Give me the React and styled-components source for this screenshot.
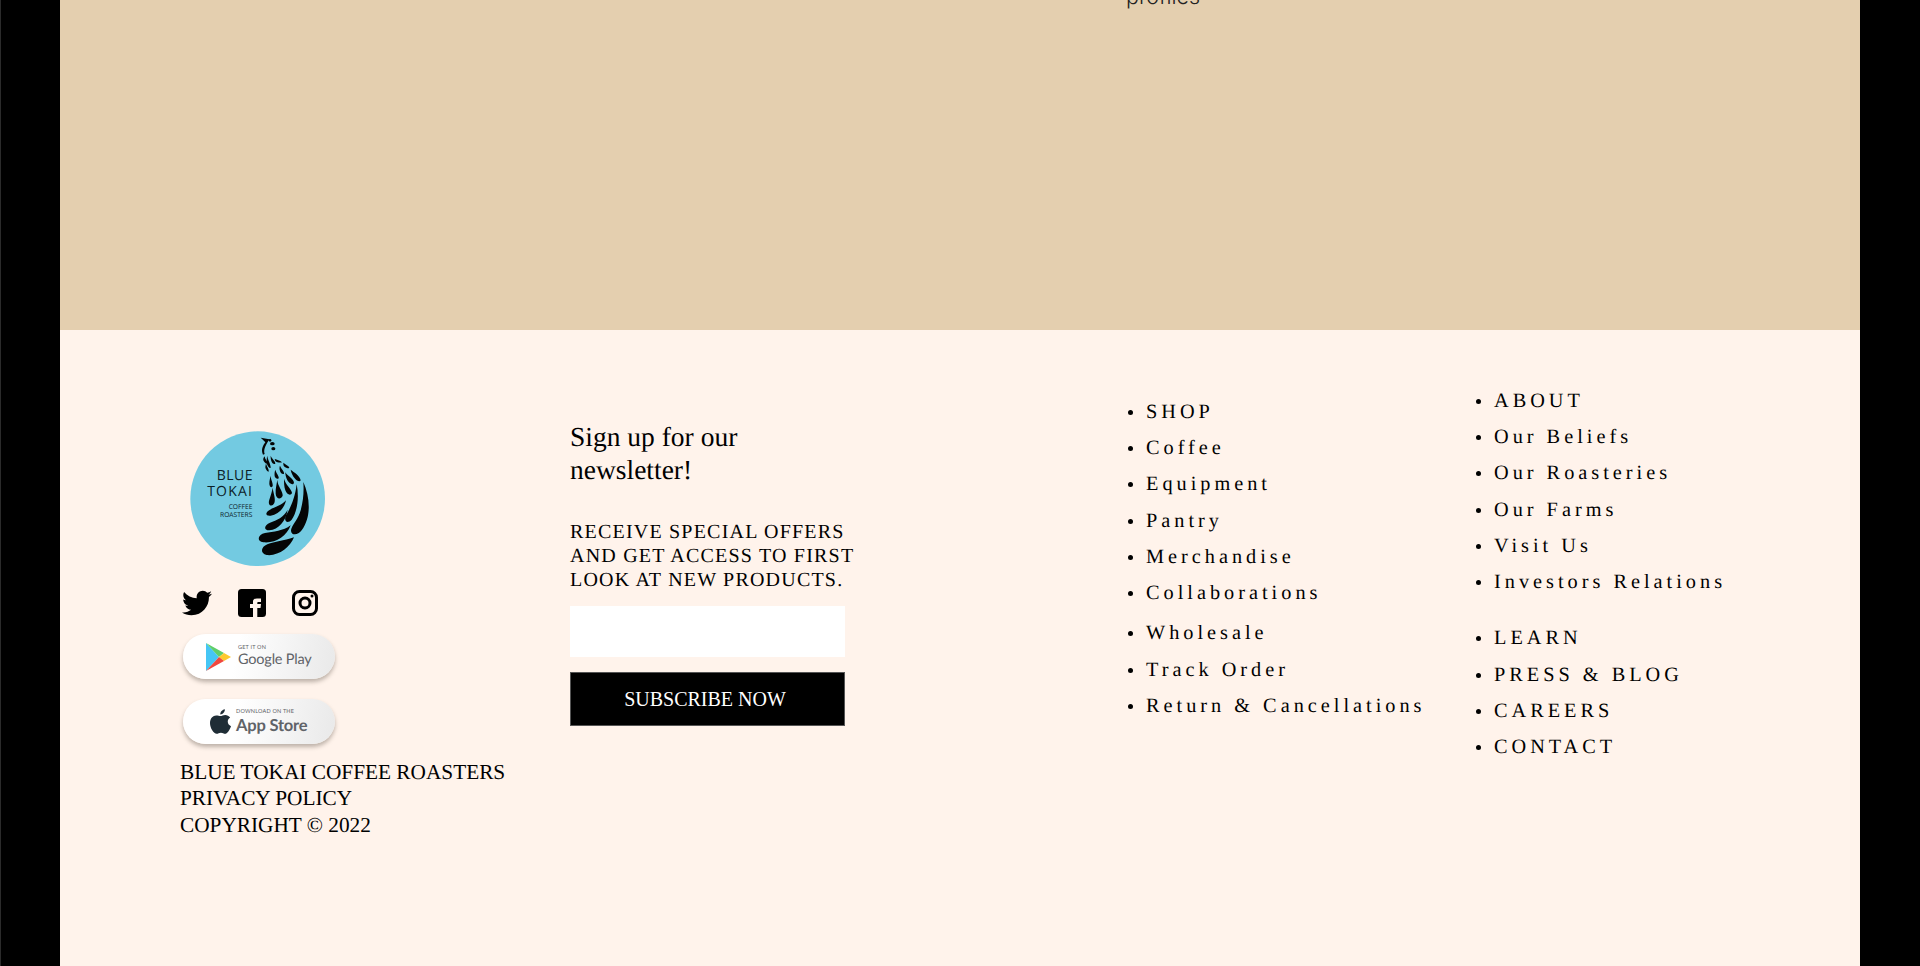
import React from "react";
import styled, { createGlobalStyle } from "styled-components";
import { FaTwitter } from "react-icons/fa";

const GlobalStyle = createGlobalStyle`
	html, body {
		margin: 0;
		background: #000;
		height: 966px;
		overflow: hidden;
		text-rendering: geometricPrecision;
	}
	body { box-shadow: inset 1px 0 0 #2b2b2b; }
	* { box-sizing: border-box; }
`;

const Page = styled.div`
	width: 1800px;
	height: 966px;
	margin: 0 auto;
	display: flex;
	flex-direction: column;
	font-family: "Liberation Serif", "Times New Roman", serif;
	color: #000;
`;

const Banner = styled.section`
	height: 330px;
	flex-shrink: 0;
	background: #e4cfaf;
	overflow: hidden;
	padding-left: 1066px;
`;

const BannerText = styled.p`
	margin: -17px 0 0;
	font-family: "Inter", sans-serif;
	font-size: 21.5px;
	line-height: 28px;
	font-weight: 300;
	color: #222;
`;

const Footer = styled.footer`
	flex: 1;
	background: #fff3eb;
	display: grid;
	grid-template-columns: 390px 555px 348px 1fr;
	padding-left: 120px;
`;

const BrandCol = styled.div`
	padding-top: 101px;
	display: flex;
	flex-direction: column;
	align-items: flex-start;
`;

const Logo = styled.svg`
	width: 135px;
	height: 135px;
	margin-left: 10px;
	display: block;
`;

const Socials = styled.div`
	display: flex;
	align-items: center;
	height: 30px;
	margin-top: 22px;
	margin-left: 2px;
	gap: 26px;
	font-size: 30px;
	svg { display: block; }
`;

const Badge = styled.a`
	width: 152px;
	height: 45px;
	margin-left: 3px;
	margin-top: ${(props) => props.$top}px;
	border-radius: 23px;
	background: linear-gradient(100deg, #ffffff 35%, #e9e9e9 100%);
	box-shadow: 0 3px 4px rgba(90, 80, 70, 0.4);
	display: flex;
	align-items: center;
	padding-left: ${(props) => props.$pad}px;
	gap: ${(props) => props.$gap}px;
	font-family: "Lato", sans-serif;
	color: #5f6368;
`;

const BadgeLabel = styled.div`
	display: flex;
	flex-direction: column;
	line-height: 1;
`;

const BadgeSmall = styled.span`
	font-size: 5.5px;
	letter-spacing: 0.2px;
	margin-bottom: 1px;
`;

const BadgeBig = styled.span`
	font-size: ${(props) => props.$size}px;
	font-weight: ${(props) => props.$weight};
	letter-spacing: -0.2px;
`;

const Legal = styled.div`
	margin-top: 14.5px;
	font-size: 21.3px;
	line-height: 26.6px;
	white-space: nowrap;
`;

const SignupCol = styled.div`
	padding-top: 90px;
	width: 275px;
`;

const SignupTitle = styled.h3`
	margin: 0;
	font-size: 27.5px;
	font-weight: 400;
	line-height: 33px;
	width: 220px;
`;

const SignupText = styled.p`
	margin: 34px 0 0;
	font-size: 20px;
	line-height: 24px;
	letter-spacing: 1.2px;
	white-space: nowrap;
`;

const EmailInput = styled.input`
	display: block;
	width: 275px;
	height: 51px;
	margin-top: 14px;
	border: 0;
	background: #fff;
`;

const SubscribeButton = styled.button`
	display: block;
	width: 275px;
	height: 54px;
	margin-top: 15px;
	padding: 0 5px 0 0;
	border: 1px solid #555;
	background: #000;
	color: #fff;
	font-family: inherit;
	font-size: 20px;
`;

const NavCol = styled.nav`
	padding-top: ${(props) => props.$top}px;
`;

const NavList = styled.ul`
	margin: 0 0 ${(props) => props.$gap || 0}px;
	padding: 0 0 0 3px;
	list-style: none;
`;

const NavItem = styled.li`
	display: flex;
	align-items: center;
	height: 36.3px;
	font-size: 20.3px;
	letter-spacing: 4px;
	white-space: nowrap;
	&::before {
		content: "";
		width: 5px;
		height: 5px;
		margin-right: 13px;
		border-radius: 50%;
		background: #000;
		flex-shrink: 0;
	}
`;

const drops = [
	"M402 381C370 392 345 393 322 402C302 410 300 430 320 434C355 438 390 412 402 381Z",
	"M392 345C370 362 340 364 315 368C292 373 290 394 310 396C345 400 380 378 392 345Z",
	"M383 298C372 320 350 330 330 337C312 345 310 360 328 360C355 358 378 332 383 298Z",
	"M378 270C365 285 345 290 330 298C315 306 315 318 332 316C355 312 373 295 378 270Z",
	"M430 215C450 260 455 320 425 360C412 378 388 375 394 355C400 340 415 325 422 300C430 270 432 245 430 215Z",
	"M410 222C418 260 412 305 395 328C382 342 370 332 378 315C390 295 405 265 410 222Z",
	"M338 232C340 250 348 265 343 278C336 292 322 285 328 268C332 255 336 245 338 232Z",
	"M352 208C352 225 370 245 368 256C362 270 348 265 347 250C346 235 350 222 352 208Z",
	"M372 205C376 222 396 238 396 248C392 258 380 252 376 240C372 228 372 216 372 205Z",
	"M376 186C385 200 402 206 402 218C398 226 388 220 382 210C378 202 376 194 376 186Z",
	"M392 178C402 186 420 196 422 210C420 216 410 212 404 204C398 196 394 188 392 178Z",
	"M332 196C332 206 340 220 338 228C334 234 328 228 328 220C328 212 330 204 332 196Z",
	"M346 178C348 188 358 198 356 204C352 208 346 204 344 198C343 190 344 184 346 178Z",
	"M360 166C364 176 374 184 372 190C368 194 362 188 360 182C358 176 358 170 360 166Z",
	"M370 157C376 162 386 166 388 172C384 176 376 172 372 168C370 164 370 160 370 157Z",
	"M344 146C350 148 360 150 366 156C360 158 350 156 346 152Z",
	"M332 136C336 146 346 152 346 160C342 164 336 158 334 152C332 146 332 140 332 136Z",
	"M322 136C322 146 332 160 332 172C328 176 322 166 320 158C320 150 320 142 322 136Z",
	"M314 138C314 146 322 152 324 160C320 162 312 156 310 150C309 144 312 140 314 138Z",
	"M318 158C318 166 328 176 326 184C322 184 316 176 316 170Z",
	"M302 82L328 87L323 95C316 108 310 118 314 131L309 133C302 118 309 105 316 96C312 91 307 87 302 82Z",
];

function App() {
	return (
		<Page>
			<GlobalStyle />
			<Banner>
				<BannerText>profiles</BannerText>
			</Banner>
			<Footer>
				<BrandCol>
					<Logo viewBox="90 62 405 405">
						<circle cx="293" cy="265" r="202" fill="#73cae1" />
						<g fontFamily="'Open Sans', sans-serif" fill="#0b2027" textAnchor="end">
							<text x="279" y="209" fontSize="42" letterSpacing="1.5">BLUE</text>
							<text x="279" y="258" fontSize="42" letterSpacing="3.5">TOKAI</text>
							<text x="277" y="295" fontSize="20">COFFEE</text>
							<text x="277" y="320" fontSize="20">ROASTERS</text>
						</g>
						{drops.map((d, index) => (
							<path key={index} d={d} fill="#050505" />
						))}
						<ellipse cx="337" cy="100" rx="7" ry="5" fill="#050505" />
						<ellipse cx="340" cy="115" rx="6" ry="5" fill="#050505" />
						<circle cx="330" cy="90" r="4" fill="#050505" />
					</Logo>
					<Socials>
						<FaTwitter />
						<svg width="28" height="28" viewBox="0 0 28 28">
							<rect width="28" height="28" rx="3.500" fill="#000" />
							<path
								d="M15 28V19H12V15H15V12.500C15 10.500 16.500 9.500 19 9.500H23V13H20.500C19.500 13 19.300 13.500 19.300 14.300V15H23L22.500 19H19.300V28Z"
								fill="#fff3eb"
							/>
						</svg>
						<svg width="26" height="26" viewBox="0 0 26 26" fill="none" stroke="#000">
							<rect x="1.500" y="1.500" width="23" height="23" rx="6" strokeWidth="3" />
							<circle cx="13" cy="13" r="5" strokeWidth="3" />
							<circle cx="20" cy="6" r="1.500" fill="#000" stroke="none" />
						</svg>
					</Socials>
					<Badge $top={16} $pad={23} $gap={6}>
						<svg width="26" height="28" viewBox="0 0 26 28">
							<path d="M0 0L13 14L0 28Z" fill="#45c6f5" />
							<path d="M0 0L18 10L13 14Z" fill="#5fce6b" />
							<path d="M18 10L25 14L18 18L13 14Z" fill="#fdc92f" />
							<path d="M0 28L13 14L18 18Z" fill="#f0483e" />
						</svg>
						<BadgeLabel>
							<BadgeSmall>GET IT ON</BadgeSmall>
							<BadgeBig $size={14.5} $weight={400}>Google Play</BadgeBig>
						</BadgeLabel>
					</Badge>
					<Badge $top={20} $pad={27} $gap={5}>
						<svg width="21" height="25" viewBox="0 0 24 28">
							<path
								d="M17 0C17.300 2.600 14.700 6 11.800 6C11.500 3.300 14.200 0.300 17 0ZM12 7.800C13.500 7.800 15 6.600 17.500 6.600C19.500 6.600 21.600 7.600 23 9.500C19 11.800 19.600 17.600 24 19.300C22.800 22.600 20 28 17.300 28C15.600 28 14.700 26.800 12.500 26.800C10.300 26.800 9.300 28 7.600 28C4.300 28 0 21.500 0 15.700C0 10.200 3.500 7 7 7C9.200 7 10.800 7.800 12 7.800Z"
								fill="#1f2d36"
							/>
						</svg>
						<BadgeLabel>
							<BadgeSmall>DOWNLOAD ON THE</BadgeSmall>
							<BadgeBig $size={16.5} $weight={700}>App Store</BadgeBig>
						</BadgeLabel>
					</Badge>
					<Legal>
						BLUE TOKAI COFFEE ROASTERS
						<br />
						PRIVACY POLICY
						<br />
						COPYRIGHT © 2022
					</Legal>
				</BrandCol>
				<SignupCol>
					<SignupTitle>Sign up for our newsletter!</SignupTitle>
					<SignupText>
						RECEIVE SPECIAL OFFERS
						<br />
						AND GET ACCESS TO FIRST
						<br />
						LOOK AT NEW PRODUCTS.
					</SignupText>
					<EmailInput type="text" />
					<SubscribeButton>SUBSCRIBE NOW</SubscribeButton>
				</SignupCol>
				<NavCol $top={64}>
					<NavList $gap={4}>
						<NavItem>SHOP</NavItem>
						<NavItem>Coffee</NavItem>
						<NavItem>Equipment</NavItem>
						<NavItem>Pantry</NavItem>
						<NavItem>Merchandise</NavItem>
						<NavItem>Collaborations</NavItem>
					</NavList>
					<NavList>
						<NavItem>Wholesale</NavItem>
						<NavItem>Track Order</NavItem>
						<NavItem>Return &amp; Cancellations</NavItem>
					</NavList>
				</NavCol>
				<NavCol $top={53}>
					<NavList $gap={20}>
						<NavItem>ABOUT</NavItem>
						<NavItem>Our Beliefs</NavItem>
						<NavItem>Our Roasteries</NavItem>
						<NavItem>Our Farms</NavItem>
						<NavItem>Visit Us</NavItem>
						<NavItem>Investors Relations</NavItem>
					</NavList>
					<NavList>
						<NavItem>LEARN</NavItem>
						<NavItem>PRESS &amp; BLOG</NavItem>
						<NavItem>CAREERS</NavItem>
						<NavItem>CONTACT</NavItem>
					</NavList>
				</NavCol>
			</Footer>
		</Page>
	);
}

export default App;
